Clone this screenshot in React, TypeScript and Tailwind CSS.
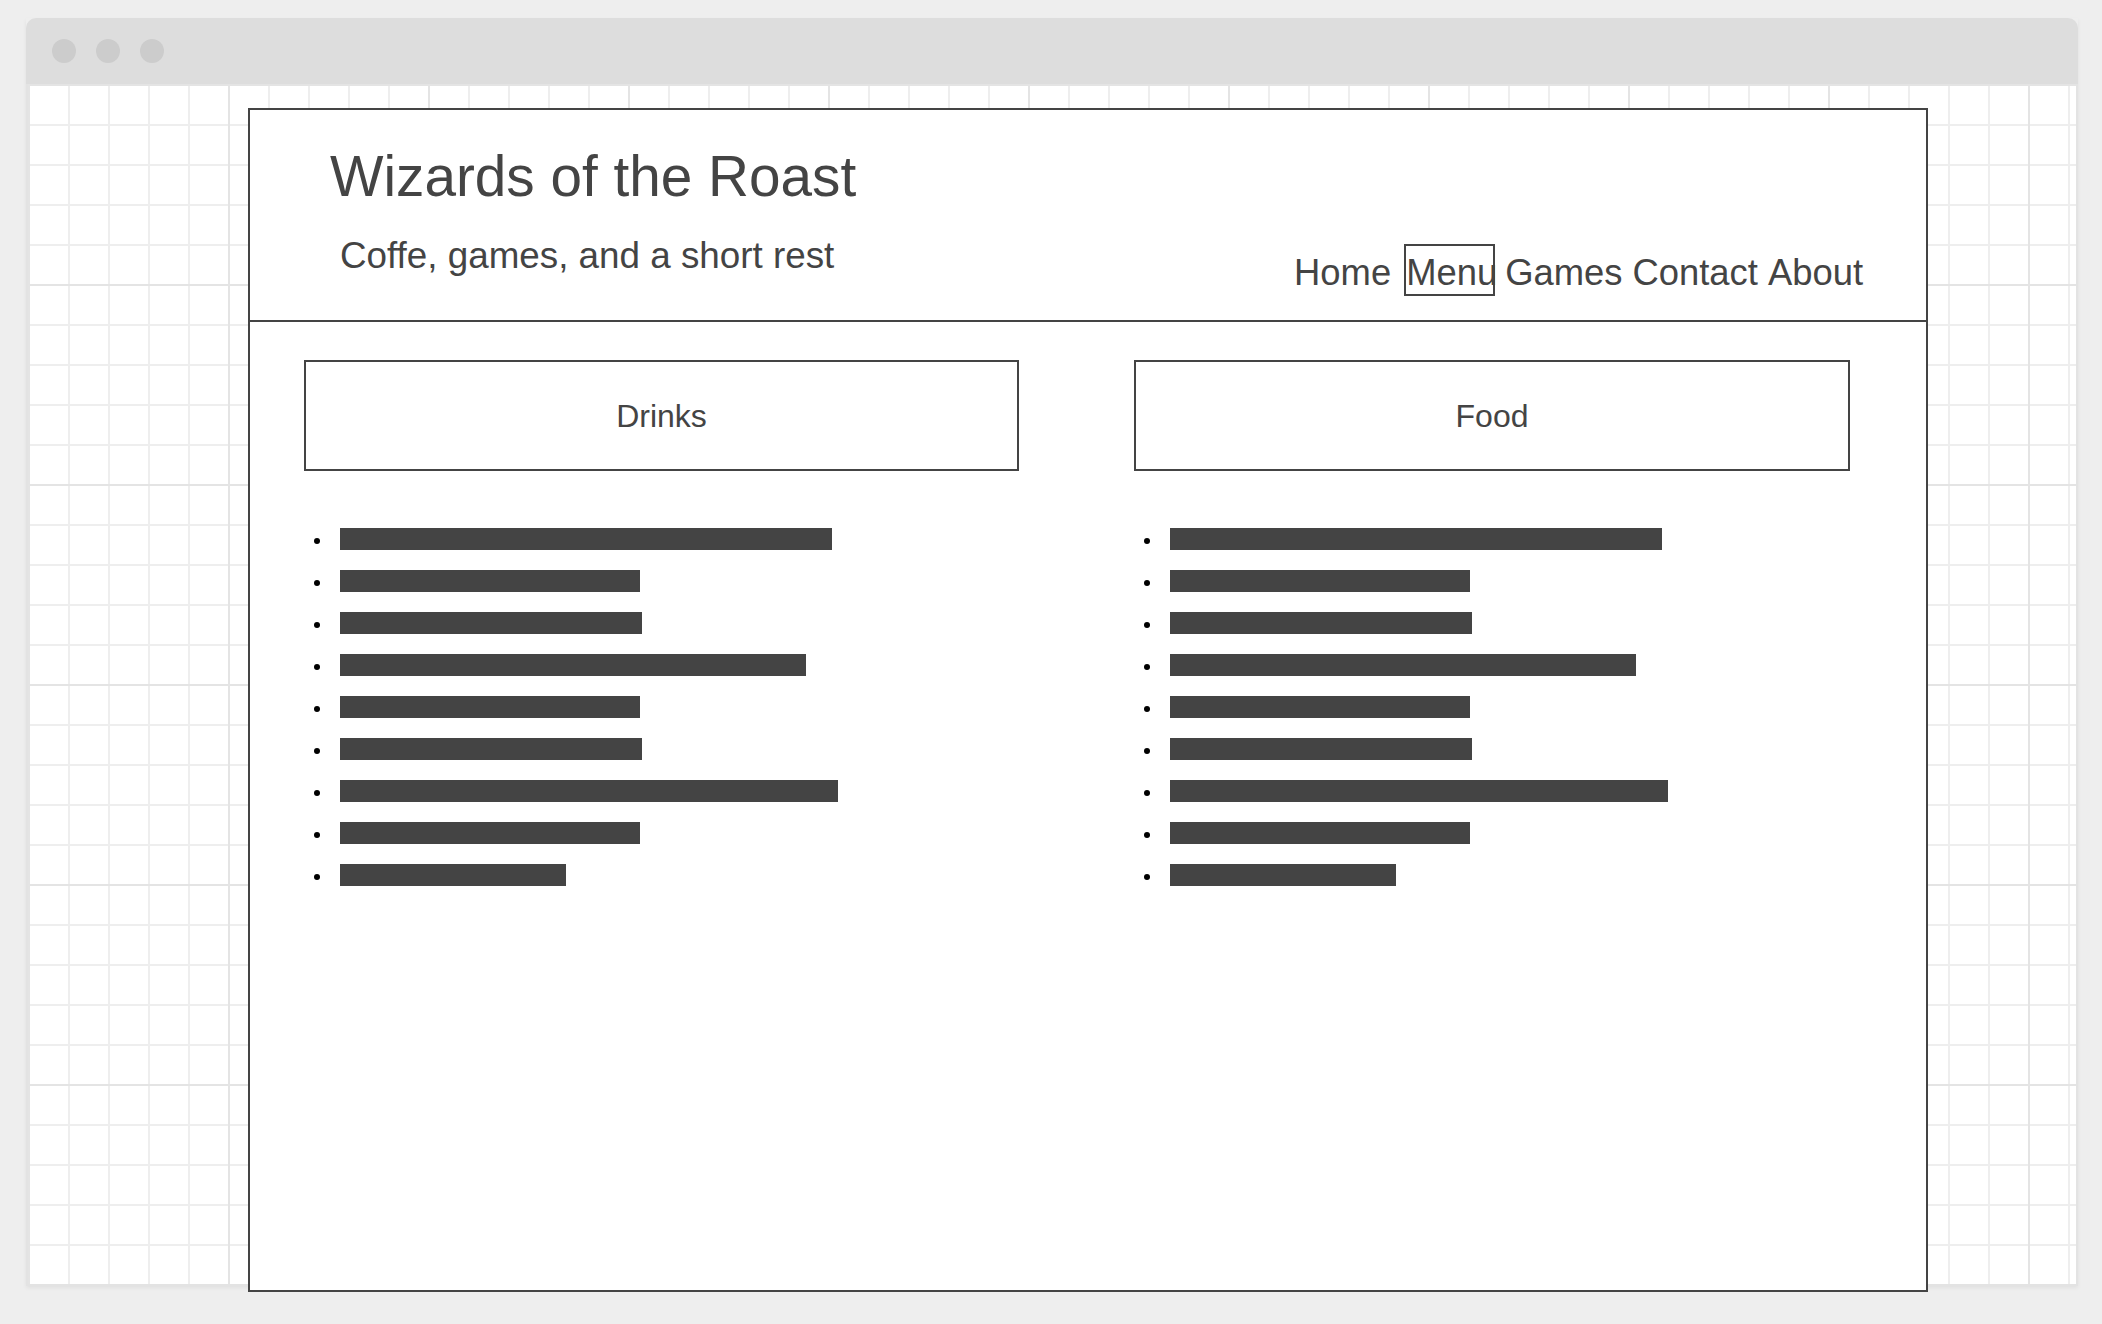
const drinks = [492, 300, 302, 466, 300, 302, 498, 300, 226];
const food = [492, 300, 302, 466, 300, 302, 498, 300, 226];

const MenuColumn = ({ title, bars }: { title: string; bars: number[] }) => (
  <div>
    <div className="flex h-[111px] items-center justify-center border-2 border-[#444] text-[32px] leading-none">
      {title}
    </div>
    <ul className="mt-[47px]">
      {bars.map((w, i) => (
        <li key={i} className="flex h-[42px] items-center">
          <span className="ml-[10px] mt-[4px] size-[6px] rounded-full bg-black" />
          <span className="ml-[20px] h-[22px] bg-[#444]" style={{ width: w }} />
        </li>
      ))}
    </ul>
  </div>
);

const App = () => {
  return (
    <div className="h-[1324px] w-[2102px] overflow-hidden bg-[#eeeeee] pl-[26px] pt-[18px] font-['Liberation_Sans',Arial,sans-serif] text-[#444]">
      <div className="w-[2052px] shadow-[0_2px_4px_rgba(0,0,0,0.06)]">
        <div className="flex h-[66px] items-center gap-[20px] rounded-t-[10px] bg-[#dddddd] pl-[26px]">
          <span className="size-[24px] rounded-full bg-[#cccccc]" />
          <span className="size-[24px] rounded-full bg-[#cccccc]" />
          <span className="size-[24px] rounded-full bg-[#cccccc]" />
        </div>

        <div className="h-[1202px] border-x-2 border-b-2 border-[#e3e3e3] bg-white bg-[linear-gradient(to_right,#e4e4e4_2px,transparent_2px),linear-gradient(to_bottom,#e4e4e4_2px,transparent_2px),linear-gradient(to_right,#eeeeee_2px,transparent_2px),linear-gradient(to_bottom,#eeeeee_2px,transparent_2px)] bg-[size:200px_200px,200px_200px,40px_40px,40px_40px] pl-[220px] pt-[24px]">
          <div className="h-[1184px] w-[1680px] border-2 border-[#444] bg-white">
            <header className="flex h-[212px] justify-between border-b-2 border-[#444]">
              <div className="pl-[80px] pt-[39px]">
                <h1 className="text-[56.7px] leading-none">Wizards of the Roast</h1>
                <p className="ml-[10px] mt-[32px] text-[36.8px] leading-none">
                  Coffe, games, and a short rest
                </p>
              </div>

              <nav className="mr-[63px] mt-[134px] flex items-baseline gap-[10px] self-start text-[36.4px] leading-none">
                <span>Home</span>
                <span className="ml-[3px] w-[91px] whitespace-nowrap border-2 border-[#444] pb-[3px] pt-[9px]">
                  Menu
                </span>
                <span>Games</span>
                <span>Contact</span>
                <span>About</span>
              </nav>
            </header>

            <div className="grid grid-cols-[715px_716px] gap-x-[115px] pl-[54px] pt-[38px]">
              <MenuColumn title="Drinks" bars={drinks} />
              <MenuColumn title="Food" bars={food} />
            </div>
          </div>
        </div>
      </div>
    </div>
  );
};

export default App;
